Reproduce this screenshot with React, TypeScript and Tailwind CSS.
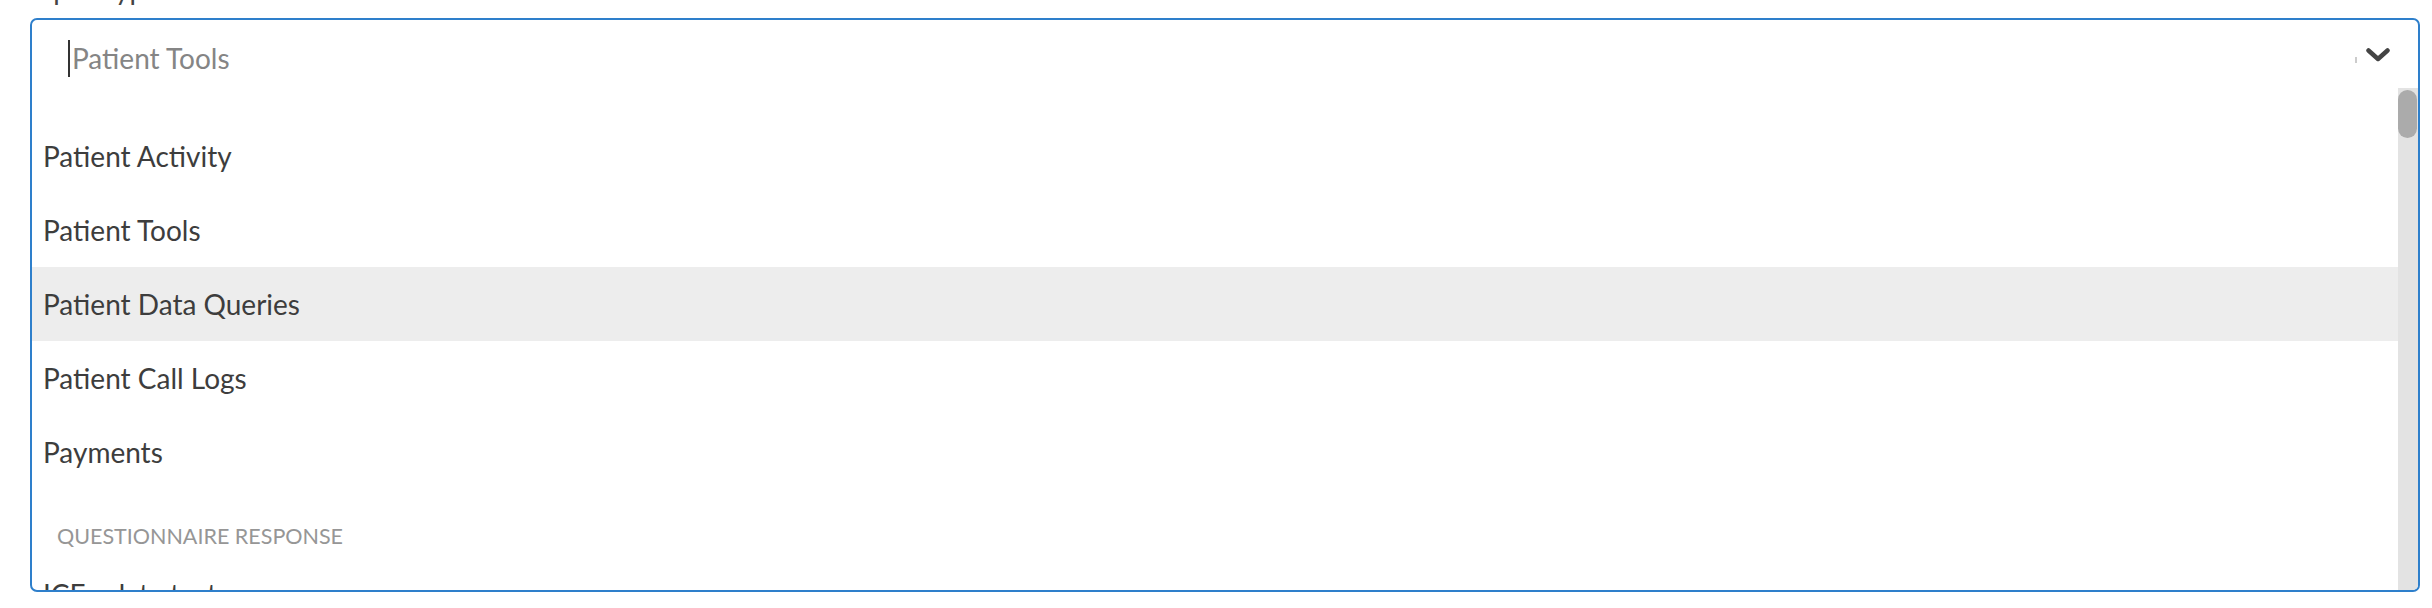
import React from "react";

const items = [
  "Patient Activity",
  "Patient Tools",
  "Patient Data Queries",
  "Patient Call Logs",
  "Payments",
];

export default function App() {
  return (
    <div className="w-[2432px] h-[608px] overflow-hidden bg-white font-['Lato',sans-serif]">
      <div className="pl-[30px] pr-[12px]">
        <div className="-mt-[28px] h-[34px] mb-[12px] text-[28px] leading-[34px] text-[#444444]">
          Input Type
        </div>
        <div className="h-[574px] border-2 border-[#2e7fcb] rounded-[7px] flex flex-col overflow-hidden">
          <div className="h-[68px] shrink-0 flex items-center pt-[8px] pl-[36px] pr-[28px]">
            <span className="w-[2px] h-[37px] bg-[#333333]" />
            <span className="ml-[2px] flex-1 text-[28px] leading-[34px] text-[#858585]">
              Patient Tools
            </span>
            <span className="w-[2px] h-[6px] bg-[#cccccc] mt-[4px] mr-[9px]" />
            <svg width="24" height="14" viewBox="0 0 24 14" className="-mt-[6px]">
              <polyline
                points="2.5,2.5 12,11 21.5,2.5"
                fill="none"
                stroke="#444444"
                strokeWidth="4.5"
                strokeLinecap="round"
                strokeLinejoin="round"
              />
            </svg>
          </div>
          <div className="flex-1 flex min-h-0">
            <div className="flex-1 overflow-hidden pt-[31px]">
              {items.map((t) => (
                <div
                  key={t}
                  className={`h-[74px] flex items-center pl-[11px] text-[28px] text-[#3d3d3d] ${
                    t === "Patient Data Queries" ? "bg-[#ededed]" : ""
                  }`}
                >
                  {t}
                </div>
              ))}
              <div className="pt-[35px] pb-[9px] pl-[25px] text-[21.5px] leading-[24px] uppercase text-[#969696]">
                Questionnaire Response
              </div>
              <div className="h-[74px] flex items-center pl-[11px] text-[28px] text-[#3d3d3d]">
                ICF - data test
              </div>
            </div>
            <div className="w-[20px] shrink-0 bg-[#e3e3e3] pt-[2px]">
              <div className="w-[19px] h-[48px] rounded-full bg-[#ababab]" />
            </div>
          </div>
        </div>
      </div>
    </div>
  );
}
